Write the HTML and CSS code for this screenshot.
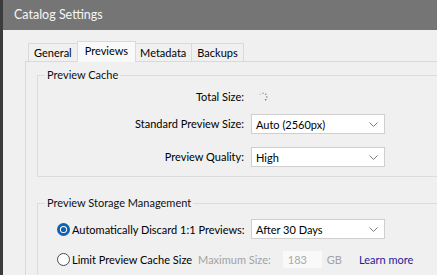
FILE: index.html
```html
<!DOCTYPE html>
<html>
<head>
<meta charset="utf-8">
<link rel="stylesheet" href="styles.css">
</head>
<body>
<div class="window">
  <div class="titlebar">Catalog Settings</div>
  <div class="client">
    <div class="tabs">
      <div class="tab">General</div>
      <div class="tab selected">Previews</div>
      <div class="tab">Metadata</div>
      <div class="tab">Backups</div>
    </div>
    <div class="panel">
      <fieldset class="group group-cache">
        <legend>Preview Cache</legend>
        <div class="form-grid">
          <div class="label row-total">Total Size:</div>
          <div class="value row-total">
            <svg class="spinner" width="10" height="10" viewBox="0 0 10 10">
              <circle cx="5" cy="1.2" r="0.8" fill="#9a9a9a"/>
              <circle cx="7.7" cy="2.3" r="0.8" fill="#8a8a8a"/>
              <circle cx="8.8" cy="5" r="0.8" fill="#7a7a7a"/>
              <circle cx="7.7" cy="7.7" r="0.8" fill="#6a6a6a"/>
              <circle cx="2.3" cy="2.3" r="0.8" fill="#c4c4c4"/>
            </svg>
          </div>
          <div class="label row-std">Standard Preview Size:</div>
          <div class="select row-std"><span>Auto (2560px)</span><svg class="chev" width="9" height="5" viewBox="0 0 9 5"><path d="M0.5 0.5 L4.5 4.5 L8.5 0.5" fill="none" stroke="#7a7a7a" stroke-width="1"/></svg></div>
          <div class="label row-quality">Preview Quality:</div>
          <div class="select row-quality"><span>High</span><svg class="chev" width="9" height="5" viewBox="0 0 9 5"><path d="M0.5 0.5 L4.5 4.5 L8.5 0.5" fill="none" stroke="#7a7a7a" stroke-width="1"/></svg></div>
        </div>
      </fieldset>
      <fieldset class="group group-storage">
        <legend>Preview Storage Management</legend>
        <div class="storage-row row-discard">
          <div class="radio-label">
            <svg class="radio" width="13" height="13" viewBox="0 0 13 13">
              <circle cx="6.5" cy="6.5" r="6.5" fill="#0f62b0"/>
              <circle cx="6.5" cy="6.5" r="3.6" fill="#ffffff"/>
              <circle cx="6.5" cy="6.5" r="2.6" fill="#0f62b0"/>
            </svg>
            <span>Automatically Discard 1:1 Previews:</span>
          </div>
          <div class="select"><span>After 30 Days</span><svg class="chev" width="9" height="5" viewBox="0 0 9 5"><path d="M0.5 0.5 L4.5 4.5 L8.5 0.5" fill="none" stroke="#7a7a7a" stroke-width="1"/></svg></div>
        </div>
        <div class="storage-row row-limit">
          <div class="radio-label">
            <svg class="radio" width="13" height="13" viewBox="0 0 13 13">
              <circle cx="6.5" cy="6.5" r="6" fill="#ffffff" stroke="#4a4a4a" stroke-width="1"/>
            </svg>
            <span>Limit Preview Cache Size</span>
          </div>
          <span class="muted max-label">Maximum Size:</span>
          <span class="num-input">183</span>
          <span class="muted gb">GB</span>
          <span class="link">Learn more</span>
        </div>
      </fieldset>
    </div>
  </div>
</div>
</body>
</html>
```
FILE: styles.css
```css
html, body {
  margin: 0;
  padding: 0;
}
body {
  width: 437px;
  height: 275px;
  overflow: hidden;
  background: #f0f0f0;
  font-family: Lato, "Liberation Sans", sans-serif;
  font-size: 11px;
  color: #000;
}
.window {
  height: 275px;
  border-left: 3px solid #3b3b3b;
  box-sizing: border-box;
  overflow: hidden;
}
.titlebar {
  height: 30px;
  background: #757575;
  color: #f6f6f6;
  font-size: 12.5px;
  line-height: 30px;
  padding-left: 11px;
}
.client {
  padding: 11px 0 0 22px;
}
.tabs {
  display: flex;
  align-items: flex-end;
  height: 20px;
  padding-left: 3px;
  position: relative;
  z-index: 1;
}
.tab {
  height: 18px;
  line-height: 17px;
  padding: 0 5px;
  border: 1px solid #dadada;
  border-bottom: none;
  box-sizing: border-box;
  background: #f0f0f0;
  white-space: nowrap;
}
.tab + .tab {
  border-left: none;
}
.tab.selected {
  height: 21px;
  margin: 0 -1px -1px -1px;
  padding: 0 7px;
  line-height: 18px;
  border-left: 1px solid #dadada;
  background: #f9f9f9;
  position: relative;
}
.panel {
  border-top: 1px solid #d9d9d9;
  border-left: 1px solid #d9d9d9;
  padding: 6px 0 0 11px;
}
.group {
  margin: 0;
  padding: 0 0 9px 0;
  border: 1px solid #dcdcdc;
  border-right: none;
  min-width: 0;
}
.group legend {
  margin-left: 7px;
  padding: 0 2px;
  line-height: 14px;
  height: 14px;
  color: #111;
}
.form-grid {
  display: grid;
  grid-template-columns: 206px 134px;
  column-gap: 7px;
  margin-top: 5px;
}
.label {
  text-align: right;
  height: 20px;
  line-height: 20px;
  white-space: nowrap;
}
.value {
  height: 20px;
  display: flex;
  align-items: center;
  padding-left: 7px;
}
.row-std {
  margin-top: 7px;
}
.row-quality {
  margin-top: 13px;
}
.select {
  height: 20px;
  box-sizing: border-box;
  border: 1px solid #cfcfcf;
  background: #ffffff;
  display: flex;
  align-items: center;
  justify-content: space-between;
  padding: 0 6px 0 4px;
  white-space: nowrap;
}
.chev {
  display: block;
}
.group-storage {
  margin-top: 19px;
  padding-bottom: 6px;
  border-bottom: none;
}
.storage-row {
  display: flex;
  align-items: center;
  height: 20px;
  padding-left: 19px;
  white-space: nowrap;
}
.row-discard {
  margin-top: 9px;
}
.row-discard .radio-label {
  width: 188px;
}
.row-discard .select {
  width: 134px;
  margin-left: 6px;
}
.row-limit {
  margin-top: 10px;
}
.radio-label {
  display: flex;
  align-items: center;
  gap: 2px;
  white-space: nowrap;
}
.radio {
  display: block;
  flex: none;
}
.muted {
  color: #a2a2a2;
}
.max-label {
  margin-left: 6px;
}
.num-input {
  margin-left: 12px;
  width: 39px;
  height: 17px;
  line-height: 17px;
  box-sizing: border-box;
  padding-left: 5px;
  background: #f9f9f9;
  color: #a8a8a8;
}
.gb {
  margin-left: 5px;
}
.link {
  margin-left: 17px;
  color: #1c1c9a;
}
```
